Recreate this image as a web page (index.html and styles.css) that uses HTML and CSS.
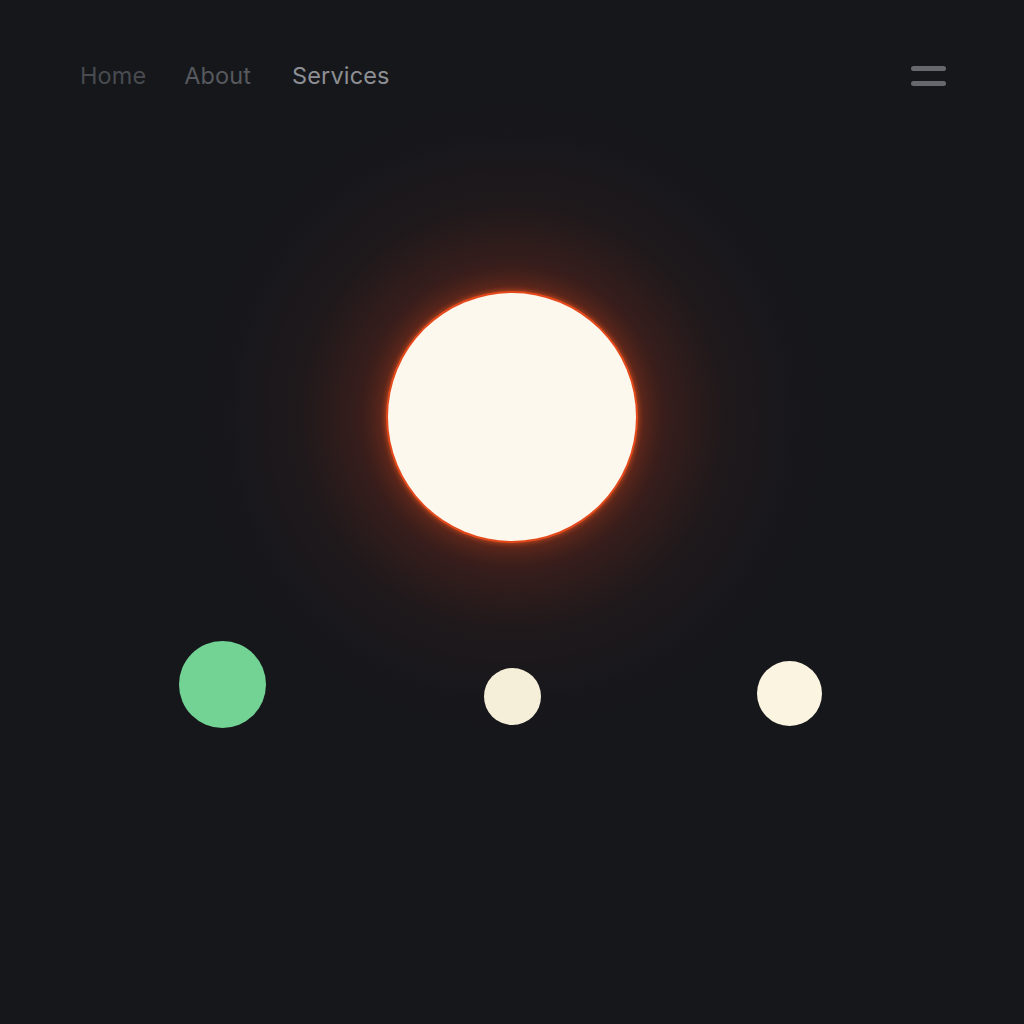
FILE: index.html
```html
<!DOCTYPE html>
<html lang="en">
<head>
<meta charset="utf-8">
<title>Orbit</title>
<link rel="stylesheet" href="styles.css">
</head>
<body>
<div class="page">
  <header class="topbar">
    <nav class="nav">
      <a class="nav-link dim" href="#">Home</a>
      <a class="nav-link mid" href="#">About</a>
      <a class="nav-link active" href="#">Services</a>
    </nav>
    <button class="menu" aria-label="Menu"><span></span><span></span></button>
  </header>
  <section class="hero">
    <div class="sun"></div>
  </section>
  <section class="dots">
    <div class="dot green"></div>
    <div class="dot cream small"></div>
    <div class="dot cream right"></div>
  </section>
</div>
</body>
</html>
```
FILE: styles.css
```css
* { box-sizing: border-box; }
html, body { margin: 0; padding: 0; }
body {
  background: #16171b;
  font-family: "Inter", "Liberation Sans", sans-serif;
  width: 1024px;
  height: 1024px;
  overflow: hidden;
}
.page { display: flex; flex-direction: column; }
.topbar {
  display: flex;
  justify-content: space-between;
  align-items: center;
  padding: 58px 78px 0 80px;
  height: 92px;
  position: relative;
  z-index: 2;
}
.nav { display: flex; gap: 38px; align-items: center; }
.nav-link {
  font-size: 23.5px;
  text-decoration: none;
  letter-spacing: 0.1px;
}
.nav-link.dim { color: #484b50; }
.nav-link.mid { color: #56595e; }
.nav-link.active { color: #8d8f94; margin-left: 3px; letter-spacing: 0.15px; }
.menu {
  background: none;
  border: 0;
  padding: 0;
  width: 35px;
  display: flex;
  flex-direction: column;
  gap: 10px;
  margin-top: 1px;
}
.menu span {
  display: block;
  height: 5px;
  border-radius: 3px;
  background: #66686d;
}
.hero {
  display: flex;
  justify-content: center;
  padding-top: 201px;
  position: relative;
  z-index: 0;
}
.sun {
  position: relative;
  width: 248px;
  height: 248px;
  border-radius: 50%;
  background: #fdf8ee;
  box-shadow:
    0 0 0 2px #e4491b,
    0 0 5px 3px rgba(235, 85, 30, 0.6),
    0 0 20px 8px rgba(170, 60, 30, 0.3);
}
.sun::before {
  content: "";
  position: absolute;
  inset: -230px;
  border-radius: 50%;
  z-index: -1;
  background: radial-gradient(circle closest-side,
    rgba(115, 44, 28, 0.66) 34%,
    rgba(92, 37, 28, 0.45) 44%,
    rgba(60, 30, 28, 0.24) 60%,
    rgba(40, 28, 28, 0.08) 80%,
    rgba(22, 23, 27, 0) 100%);
}
.dots {
  display: flex;
  align-items: flex-start;
  padding-left: 179px;
  gap: 218px;
  padding-top: 100px;
  position: relative;
  z-index: 1;
}
.dot { border-radius: 50%; }
.green {
  width: 87px; height: 87px;
  background: #72d394;
}
.cream.small {
  width: 57px; height: 57px;
  background: #f5eed9;
  margin-top: 27px;
}
.cream.right {
  width: 65px; height: 65px;
  background: #fbf4e1;
  margin-top: 20px;
  margin-left: -2px;
}
```
